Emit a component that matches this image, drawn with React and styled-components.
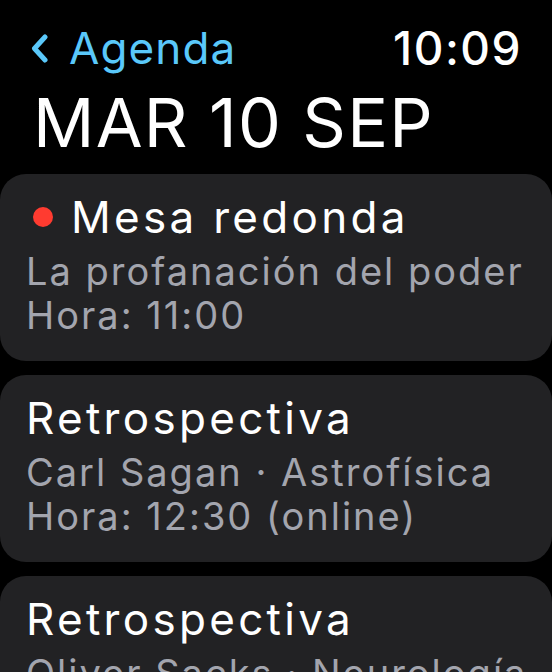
import React from "react";
import styled, { createGlobalStyle } from "styled-components";

const Global = createGlobalStyle`
  html, body { margin: 0; padding: 0; background: #000; }
  body { font-family: Inter, "Noto Sans", sans-serif; -webkit-font-smoothing: antialiased; }
  #root { width: 552px; height: 672px; overflow: hidden; background: #000; }
`;

const Screen = styled.div`
  width: 552px;
  height: 672px;
  overflow: hidden;
  background: #000;
  display: flex;
  flex-direction: column;
`;

const TopBar = styled.div`
  display: flex;
  align-items: center;
  justify-content: space-between;
  height: 44px;
  margin-top: 26px;
  padding: 0 30px 0 31px;
`;

const Back = styled.div`
  display: flex;
  align-items: center;
  gap: 21px;
  color: #5ac8fa;
  font-size: 44px;
  letter-spacing: 1.1px;
  line-height: 44px;
`;

const Clock = styled.div`
  color: #fff;
  font-size: 46px;
  line-height: 44px;
  font-weight: 500;
  letter-spacing: 1.5px;
`;

const DateTitle = styled.h1`
  margin: 18px 0 0 33px;
  color: #fff;
  font-size: 68px;
  font-weight: 400;
  line-height: 68px;
  letter-spacing: 1.2px;
`;

const List = styled.div`
  display: flex;
  flex-direction: column;
  gap: 14px;
  margin-top: 18px;
`;

const Card = styled.div`
  background: #222224;
  border-radius: 26px;
  padding: 18px 26px 20px 26px;
  height: 187px;
  box-sizing: border-box;
  flex-shrink: 0;
`;

const Title = styled.div`
  display: flex;
  align-items: center;
  gap: 18px;
  color: #fff;
  font-size: 44px;
  line-height: 50px;
  letter-spacing: 3.3px;
  margin-bottom: 7px;
  white-space: nowrap;
`;

const Dot = styled.span`
  width: 20px;
  height: 20px;
  border-radius: 50%;
  background: #ff3b30;
  margin-left: 7px;
  flex-shrink: 0;
`;

const Sub = styled.div`
  color: #a3a5ae;
  font-size: 38px;
  line-height: 44px;
  letter-spacing: 2px;
  white-space: nowrap;
`;

const events = [
  { title: "Mesa redonda", dot: true, lines: ["La profanación del poder", "Hora: 11:00"] },
  { title: "Retrospectiva", lines: ["Carl Sagan · Astrofísica", "Hora: 12:30 (online)"] },
  { title: "Retrospectiva", lines: ["Oliver Sacks · Neurología", "Hora: 16:00"] },
];

export default function App() {
  return (
    <Screen>
      <Global />
      <TopBar>
        <Back>
          <svg width="17" height="29" viewBox="0 0 17 29">
            <path d="M14 3 L3.5 14.5 L14 26" fill="none" stroke="#5ac8fa" strokeWidth="5" strokeLinecap="round" strokeLinejoin="round" />
          </svg>
          <span>Agenda</span>
        </Back>
        <Clock>10:09</Clock>
      </TopBar>
      <DateTitle>MAR 10 SEP</DateTitle>
      <List>
        {events.map((e, i) => (
          <Card key={i}>
            <Title>
              {e.dot && <Dot />}
              <span>{e.title}</span>
            </Title>
            {e.lines.map((l, j) => (
              <Sub key={j}>{l}</Sub>
            ))}
          </Card>
        ))}
      </List>
    </Screen>
  );
}
